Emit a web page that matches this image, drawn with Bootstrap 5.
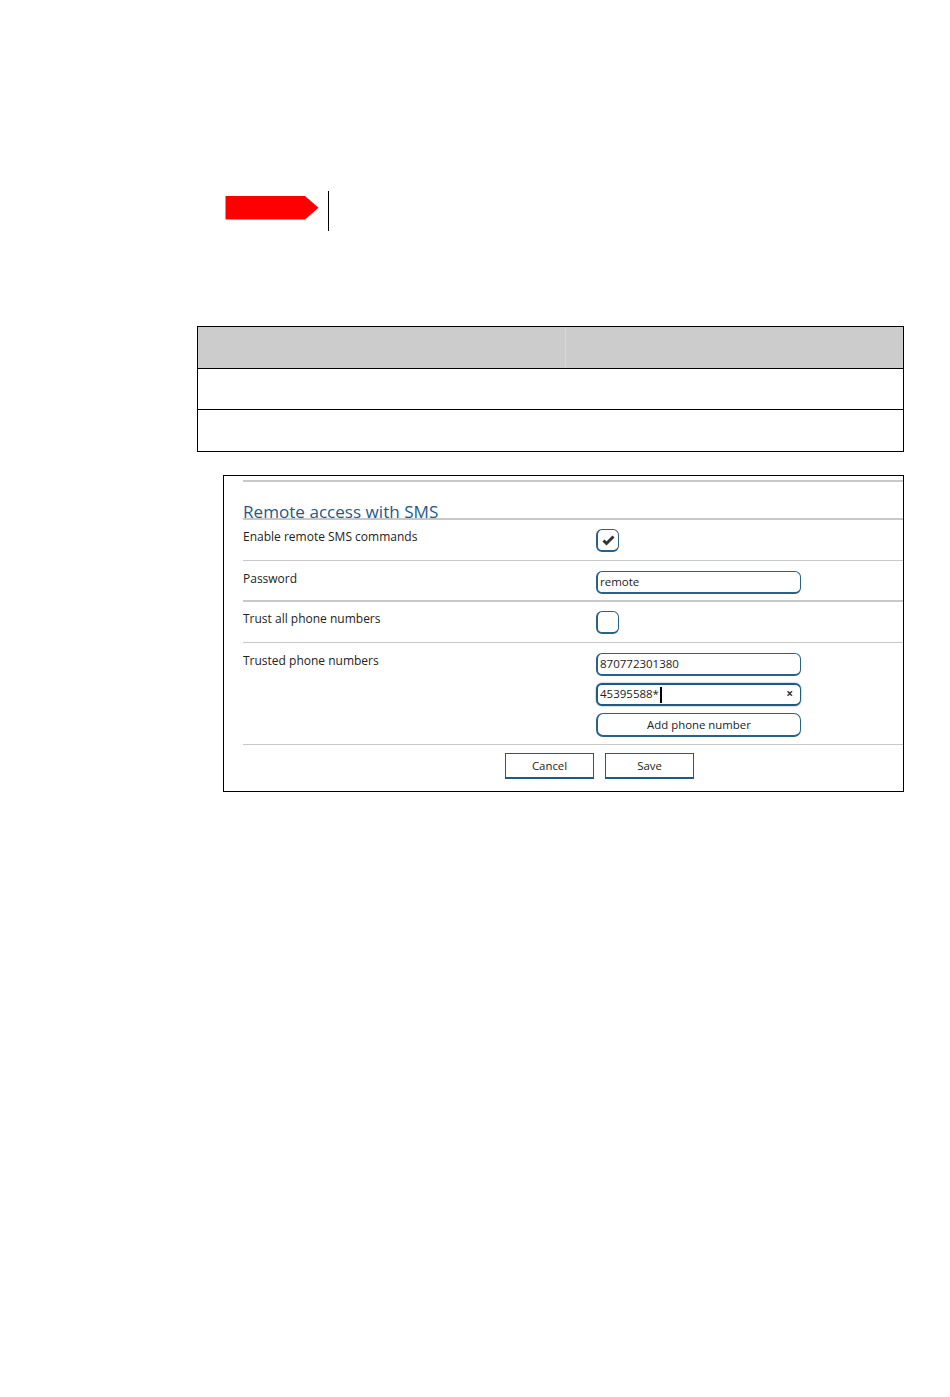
<!DOCTYPE html>
<html lang="en">
<head>
<meta charset="utf-8">
<title>Remote access with SMS</title>
<link href="https://cdn.jsdelivr.net/npm/bootstrap@5.3.0/dist/css/bootstrap.min.css" rel="stylesheet">
<style>
html,body{background:#fff;}
body{font-family:"Open Sans","Noto Sans",sans-serif;color:#222;font-size:12px;}
.sheet{padding:191px 46px 0 197px;height:1397px;}
.flag-row{height:40px;padding-left:28px;}
.flag-shape{margin-top:5px;}
.flag-rule{width:1px;height:40px;background:#000;margin-left:9px;}
.spec-table{margin:95px 0 0;border:1px solid #000;border-collapse:collapse;table-layout:fixed;width:707px;}
.spec-table>*>tr>*{padding:0;border-bottom:1px solid #000;border-top:0;border-left:0;border-right:0;background:transparent;}
.spec-table thead tr th{height:42px;background:#ccc;box-shadow:none;}
.spec-table thead tr th:first-child{width:368px;box-shadow:inset -1px 0 0 #d8d8d8;}
.spec-table tbody td{height:41px;}
.spec-table tbody tr:last-child td{height:42px;border-bottom:0;}
.shot{margin:23px 0 0 26px;border:1px solid #000;height:317px;padding:4px 0 0 19px;}
.rule-top{border-top:2px solid #c8c8c8;}
.shot-title{height:38px;border-bottom:2px solid #c8c8c8;margin:0;font-family:"Open Sans",sans-serif;font-size:17.1px;font-weight:400;color:#1f5a85;line-height:20px;padding-top:20px;white-space:nowrap;}
.form-line{border-bottom:1px solid #c8c8c8;}
.form-line.thick{border-bottom-width:2px;}
.lbl{width:353px;flex:none;padding-top:8px;line-height:18px;}
.lbl.low{padding-top:9px;}
.h-a{height:41px;}.h-b{height:41px;}.h-c{height:41px;}.h-d{height:102px;}
.ctl{width:205px;}
.pill.form-control{display:block;height:23px;min-height:0;width:205px;padding:0 2px 2px;font-size:11.5px;line-height:19px;color:#222;border:1px solid #2a6186;border-left-width:2px;border-bottom-width:2px;border-radius:6px;background:#fff;box-shadow:none;font-family:inherit;}
.pill.is-focus{display:flex;align-items:center;justify-content:space-between;border-width:2px 1px 2px 2px;border-color:#1f5a85;box-shadow:0 0 2px #6b97b5;}
.caret-bar{display:inline-block;width:2px;height:16px;background:#000;vertical-align:middle;margin-left:1px;}
.clear-x{font-size:12px;font-weight:700;line-height:1;color:#333;padding-right:5px;}
.tick-box{width:23px;height:23px;border:1px solid #2a6186;border-left-width:2px;border-bottom-width:2px;border-radius:6px;background:#fff;}
.btn.btn-add{width:205px;height:24px;padding:0;font-size:11.4px;line-height:20px;color:#222;border:1px solid #2a6186;border-left-width:2px;border-bottom-width:2px;border-radius:7px;background:#fff;}
.btn.btn-act{width:89px;height:26px;padding:0;font-size:11.4px;line-height:22px;color:#222;border:1px solid #1f5a85;border-bottom-width:2px;border-radius:0;background:#fff;}
.act-row{padding:8px 0 0 262px;gap:11px;}
.stack{gap:7px;padding-top:10px;}
.pad-box{padding-top:9px;}
.pad-input{padding-top:10px;}
</style>
</head>
<body>
<div class="sheet">
  <div class="flag-row d-flex align-items-start">
    <svg class="flag-shape" width="94" height="24" viewBox="0 0 94 24" aria-hidden="true"><polygon points="0.5,0 80,0 93.5,11.7 80,23.5 0.5,23.5" fill="#ff0000"/></svg>
    <div class="flag-rule"></div>
  </div>

  <table class="table spec-table">
    <thead><tr><th></th><th></th></tr></thead>
    <tbody>
      <tr><td colspan="2"></td></tr>
      <tr><td colspan="2"></td></tr>
    </tbody>
  </table>

  <div class="shot">
    <div class="rule-top"></div>
    <h2 class="shot-title">Remote access with SMS</h2>

    <div class="d-flex form-line h-a">
      <div class="lbl">Enable remote SMS commands</div>
      <div class="pad-box">
        <div class="tick-box d-flex align-items-center justify-content-center">
          <svg width="13" height="11" viewBox="0 0 13 11" aria-hidden="true"><path d="M1.5 5.5 L4.5 8.5 L11.5 1.5" fill="none" stroke="#333" stroke-width="3"/></svg>
        </div>
      </div>
    </div>

    <div class="d-flex form-line thick h-b">
      <div class="lbl low">Password</div>
      <div class="pad-input ctl"><input class="form-control pill" type="text" value="remote" aria-label="Password"></div>
    </div>

    <div class="d-flex form-line h-c">
      <div class="lbl">Trust all phone numbers</div>
      <div class="pad-box"><div class="tick-box"></div></div>
    </div>

    <div class="d-flex form-line h-d">
      <div class="lbl low">Trusted phone numbers</div>
      <div class="d-flex flex-column stack ctl">
        <input class="form-control pill" type="text" value="870772301380" aria-label="Trusted phone number 1">
        <div class="form-control pill is-focus"><span>45395588*<span class="caret-bar"></span></span><span class="clear-x">×</span></div>
        <button type="button" class="btn btn-add">Add phone number</button>
      </div>
    </div>

    <div class="d-flex act-row">
      <button type="button" class="btn btn-act">Cancel</button>
      <button type="button" class="btn btn-act">Save</button>
    </div>
  </div>
</div>
<script src="https://cdn.jsdelivr.net/npm/bootstrap@5.3.0/dist/js/bootstrap.bundle.min.js"></script>
</body>
</html>
